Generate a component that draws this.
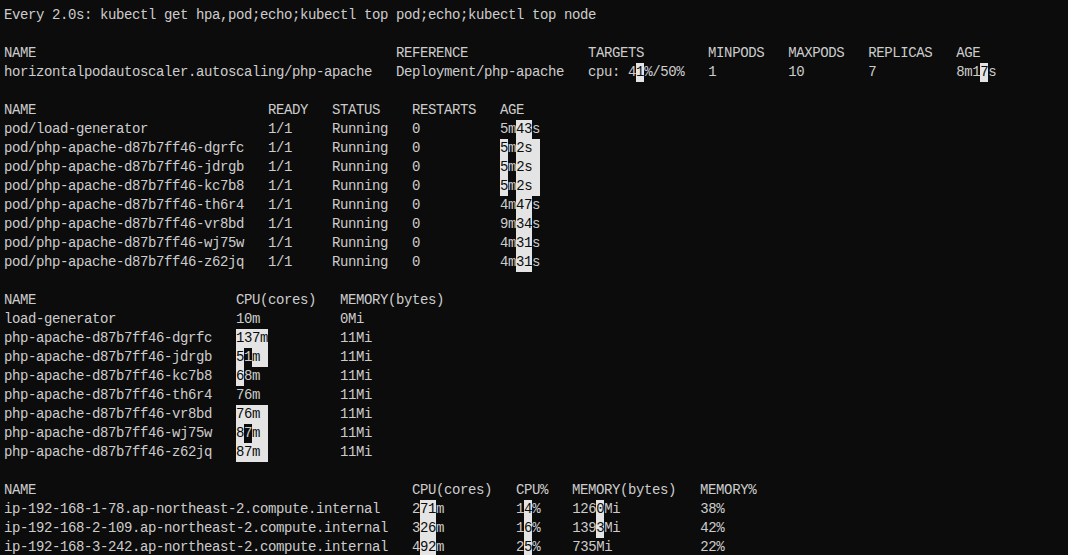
import React from "react";

function row(cells, widths) {
  let out = "";
  cells.forEach((c, i) => {
    const len = c.replace(/[\[\]]/g, "").length;
    const w = widths[i];
    out += c + (w && w > len ? " ".repeat(w - len) : "");
  });
  return out;
}

const lines = [
  "Every 2.0s: kubectl get hpa,pod;echo;kubectl top pod;echo;kubectl top node",
  "",
  row(["NAME", "REFERENCE", "TARGETS", "MINPODS", "MAXPODS", "REPLICAS", "AGE"], [49, 24, 15, 10, 10, 11]),
  row(["horizontalpodautoscaler.autoscaling/php-apache", "Deployment/php-apache", "cpu: 4[1]%/50%", "1", "10", "7", "8m1[7]s"], [49, 24, 15, 10, 10, 11]),
  "",
  row(["NAME", "READY", "STATUS", "RESTARTS", "AGE"], [33, 8, 10, 11]),
  row(["pod/load-generator", "1/1", "Running", "0", "5m[43]s"], [33, 8, 10, 11]),
  row(["pod/php-apache-d87b7ff46-dgrfc", "1/1", "Running", "0", "[5]m[2s ]"], [33, 8, 10, 11]),
  row(["pod/php-apache-d87b7ff46-jdrgb", "1/1", "Running", "0", "[5]m[2s ]"], [33, 8, 10, 11]),
  row(["pod/php-apache-d87b7ff46-kc7b8", "1/1", "Running", "0", "[5]m[2s ]"], [33, 8, 10, 11]),
  row(["pod/php-apache-d87b7ff46-th6r4", "1/1", "Running", "0", "4m[47]s"], [33, 8, 10, 11]),
  row(["pod/php-apache-d87b7ff46-vr8bd", "1/1", "Running", "0", "9m[34]s"], [33, 8, 10, 11]),
  row(["pod/php-apache-d87b7ff46-wj75w", "1/1", "Running", "0", "4m[31]s"], [33, 8, 10, 11]),
  row(["pod/php-apache-d87b7ff46-z62jq", "1/1", "Running", "0", "4m[31]s"], [33, 8, 10, 11]),
  "",
  row(["NAME", "CPU(cores)", "MEMORY(bytes)"], [29, 13]),
  row(["load-generator", "10m", "0Mi"], [29, 13]),
  row(["php-apache-d87b7ff46-dgrfc", "[137m]", "11Mi"], [29, 13]),
  row(["php-apache-d87b7ff46-jdrgb", "[5]1[m ]", "11Mi"], [29, 13]),
  row(["php-apache-d87b7ff46-kc7b8", "[6]8m", "11Mi"], [29, 13]),
  row(["php-apache-d87b7ff46-th6r4", "76m", "11Mi"], [29, 13]),
  row(["php-apache-d87b7ff46-vr8bd", "[76m ]", "11Mi"], [29, 13]),
  row(["php-apache-d87b7ff46-wj75w", "[8]7[m ]", "11Mi"], [29, 13]),
  row(["php-apache-d87b7ff46-z62jq", "[87m ]", "11Mi"], [29, 13]),
  "",
  row(["NAME", "CPU(cores)", "CPU%", "MEMORY(bytes)", "MEMORY%"], [51, 13, 7, 16]),
  row(["ip-192-168-1-78.ap-northeast-2.compute.internal", "2[71]m", "1[4]%", "126[0]Mi", "38%"], [51, 13, 7, 16]),
  row(["ip-192-168-2-109.ap-northeast-2.compute.internal", "3[26]m", "1[6]%", "139[3]Mi", "42%"], [51, 13, 7, 16]),
  row(["ip-192-168-3-242.ap-northeast-2.compute.internal", "4[92]m", "2[5]%", "735Mi", "22%"], [51, 13, 7, 16]),
];

function Line({ text }) {
  const parts = text.split(/(\[[^\]]*\])/).filter((p) => p.length > 0);
  return (
    <div className="h-[19px] leading-[19px] whitespace-pre">
      {parts.map((p, i) =>
        p.startsWith("[") ? (
          <span key={i} className="inline-block h-[19px] leading-[19px] bg-[#e4e4e4] text-[#0c0c0c]">
            {p.slice(1, -1)}
          </span>
        ) : (
          <span key={i}>{p}</span>
        )
      )}
    </div>
  );
}

export default function App() {
  return (
    <div
      className="w-[1068px] h-[555px] overflow-hidden bg-[#0c0c0c] text-[#cccccc] pl-[4px] pt-[6px] text-[14px] tracking-[-0.4px]"
      style={{ fontFamily: '"Liberation Mono", "DejaVu Sans Mono", monospace' }}
    >
      {lines.map((l, i) => (
        <Line key={i} text={l} />
      ))}
    </div>
  );
}
